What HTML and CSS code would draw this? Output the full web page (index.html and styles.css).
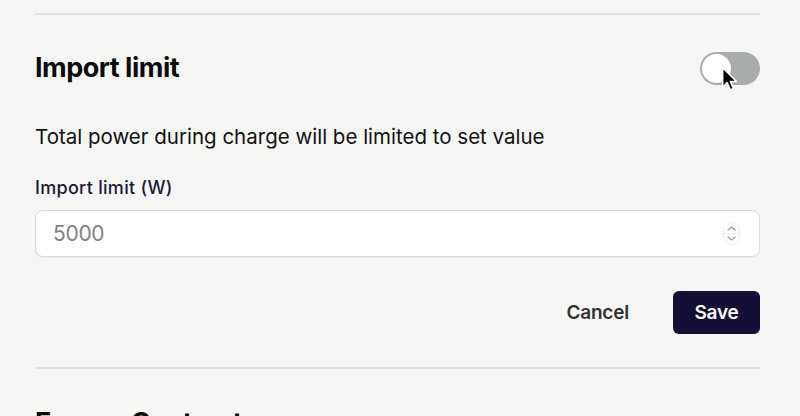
FILE: index.html
```html
<!DOCTYPE html>
<html lang="en">
<head>
<meta charset="utf-8">
<link rel="stylesheet" href="styles.css">
</head>
<body>
<div class="page">
  <section class="section">
    <div class="section-head">
      <h2 class="title">Import limit</h2>
      <div class="toggle-wrap">
        <span class="toggle"><span class="knob"></span></span>
        <svg class="cursor" width="18" height="27" viewBox="0 0 16 24">
          <path d="M1.5 1.5 L1.5 18.5 L5.5 14.8 L8.3 21.2 L11 20 L8.3 13.8 L13.8 13.8 Z" fill="#000" stroke="#fff" stroke-width="1.3" stroke-linejoin="round"/>
        </svg>
      </div>
    </div>
    <p class="desc">Total power during charge will be limited to set value</p>
    <label class="label" for="limit">Import limit (W)</label>
    <div class="input">
      <span class="placeholder">5000</span>
      <span class="spinner">
        <svg width="17" height="23" viewBox="0 0 17 23">
          <rect x="0.5" y="0.5" width="16" height="22" rx="8" fill="#fff" stroke="#ededed"/>
          <line x1="1" y1="11.5" x2="16" y2="11.5" stroke="#ededed"/>
          <path d="M5 8 L8.5 5 L12 8" fill="none" stroke="#9c9c9c" stroke-width="1.2" stroke-linecap="round" stroke-linejoin="round"/>
          <path d="M5 15 L8.5 18 L12 15" fill="none" stroke="#9c9c9c" stroke-width="1.2" stroke-linecap="round" stroke-linejoin="round"/>
        </svg>
      </span>
    </div>
    <div class="actions">
      <button class="btn btn-ghost">Cancel</button>
      <button class="btn btn-primary">Save</button>
    </div>
  </section>
  <section class="section section-next">
    <h2 class="title">Energy Contract</h2>
  </section>
</div>
</body>
</html>
```
FILE: styles.css
```css
html, body {
  margin: 0;
  padding: 0;
  background: #f6f7f5;
  font-family: Inter, "Noto Sans", sans-serif;
  color: #111;
  overflow: hidden;
  height: 416px;
}
.page {
  padding: 13px 40px 0 35px;
}
.section {
  border-top: 2px solid #e2e3e1;
}
.section-head {
  display: flex;
  align-items: center;
  justify-content: space-between;
  padding-top: 36px;
}
.title {
  margin: 0;
  font-size: 27px;
  font-weight: 700;
  letter-spacing: -0.5px;
  line-height: 34px;
  color: #0b0b0b;
}
.toggle-wrap {
  position: relative;
  width: 60px;
  height: 33px;
}
.toggle {
  display: block;
  box-sizing: border-box;
  width: 60px;
  height: 33px;
  border-radius: 17px;
  background: #a9acad;
  padding: 2px;
}
.knob {
  display: block;
  width: 29px;
  height: 29px;
  border-radius: 50%;
  background: #fff;
}
.cursor {
  position: absolute;
  left: 21px;
  top: 14px;
}
.desc {
  margin: 38px 0 0;
  font-size: 20.5px;
  line-height: 28px;
  color: #111;
}
.label {
  display: block;
  margin-top: 26px;
  font-size: 18px;
  font-weight: 500;
  letter-spacing: 0.3px;
  line-height: 22px;
  color: #1c1a3a;
}
.input {
  margin-top: 11px;
  box-sizing: border-box;
  height: 47px;
  background: #fff;
  border: 1px solid #d9d9d9;
  box-shadow: 0 1px 1px rgba(0,0,0,0.04);
  border-radius: 8px;
  display: flex;
  align-items: center;
  justify-content: space-between;
  padding: 0 19px 0 17px;
}
.placeholder {
  font-size: 21px;
  letter-spacing: -0.3px;
  color: #7f8283;
}
.spinner {
  display: flex;
}
.actions {
  display: flex;
  justify-content: flex-end;
  align-items: center;
  gap: 44px;
  margin-top: 34px;
  padding-bottom: 33px;
}
.btn {
  font-family: inherit;
  font-size: 19px;
  font-weight: 600;
  letter-spacing: -0.2px;
  border: none;
  cursor: pointer;
}
.btn-ghost {
  background: transparent;
  color: #333;
  padding: 0;
}
.btn-primary {
  background: #140f35;
  color: #fff;
  border-radius: 6px;
  width: 87px;
  height: 43px;
}
.section-next .title {
  padding-top: 37px;
}
```
